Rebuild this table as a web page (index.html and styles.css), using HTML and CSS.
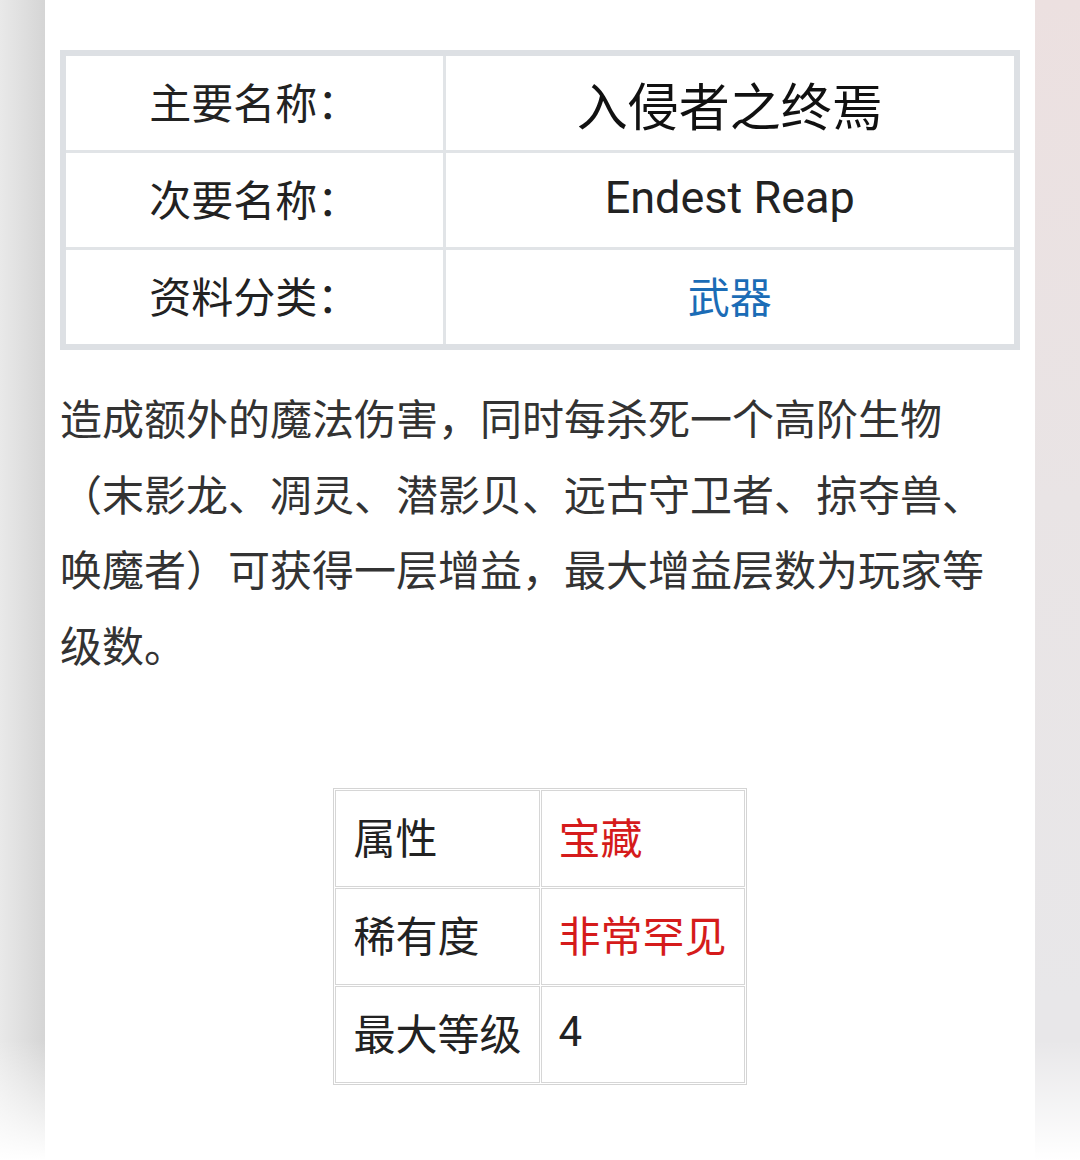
FILE: index.html
```html
<!DOCTYPE html>
<html lang="zh-CN">
<head>
<meta charset="utf-8">
<title>入侵者之终焉</title>
<link rel="stylesheet" href="styles.css">
</head>
<body>
<div class="page">
  <div class="side side-left"></div>
  <main class="panel">
    <table class="infobox">
      <colgroup><col class="col-label"><col></colgroup>
      <tr class="r1">
        <td class="label">主要名称：</td>
        <td class="value title">入侵者之终焉</td>
      </tr>
      <tr class="r2">
        <td class="label">次要名称：</td>
        <td class="value latin">Endest Reap</td>
      </tr>
      <tr class="r3">
        <td class="label">资料分类：</td>
        <td class="value"><a class="link" href="#">武器</a></td>
      </tr>
    </table>
    <p class="desc">造成额外的魔法伤害，同时每杀死一个高阶生物（末影龙、凋灵、潜影贝、远古守卫者、掠夺兽、唤魔者）可获得一层增益，最大增益层数为玩家等级数。</p>
    <table class="stats">
      <tr>
        <td>属性</td>
        <td class="red">宝藏</td>
      </tr>
      <tr>
        <td>稀有度</td>
        <td class="red">非常罕见</td>
      </tr>
      <tr>
        <td>最大等级</td>
        <td class="num">4</td>
      </tr>
    </table>
  </main>
  <div class="side side-right"></div>
</div>
</body>
</html>
```
FILE: styles.css
```css
html, body {
  margin: 0;
  padding: 0;
  background: #ffffff;
}

.page {
  display: grid;
  grid-template-columns: 45px 990px 45px;
  height: 1160px;
  overflow: hidden;
  font-family: "Noto Sans CJK SC", "Noto Sans", sans-serif;
}

.side-left {
  background:
    linear-gradient(to bottom, rgba(255,255,255,0) 0, rgba(255,255,255,0) 1040px, #ffffff 1160px),
    linear-gradient(to right, #e9e9e9 0, #dedede 25px, #d5d5d5 45px);
}

.side-right {
  background:
    linear-gradient(to bottom, rgba(255,255,255,0) 0, rgba(255,255,255,0) 1040px, #ffffff 1160px),
    linear-gradient(to bottom, rgba(236,224,224,1) 0, rgba(233,228,229,1) 500px, rgba(232,231,233,1) 1000px);
}

.panel {
  background: #ffffff;
  padding: 50px 15px 0;
  min-width: 0;
}

.infobox {
  width: 960px;
  border-collapse: collapse;
  border: 6px solid #dde0e4;
  table-layout: fixed;
}

.col-label {
  width: 381px;
}

.infobox td {
  border: 3px solid #e1e4e7;
  padding: 0 0 4px;
  text-align: center;
  vertical-align: middle;
  height: 90px;
}

.infobox .label {
  font-size: 42px;
  color: #222222;
  line-height: 60px;
}

.infobox .title {
  font-size: 51px;
  color: #111111;
  line-height: 60px;
  padding: 2px 0 0;
}

.infobox .latin {
  font-family: Roboto, "Noto Sans CJK SC", sans-serif;
  font-size: 45px;
  color: #222222;
  line-height: 60px;
}

.link {
  font-size: 42px;
  color: #1b6cb6;
  text-decoration: none;
  line-height: 60px;
}

.desc {
  margin: 29px 0 0;
  font-size: 42px;
  line-height: 75.6px;
  color: #333333;
}

.stats {
  margin: 107px auto 0;
  border: 1px solid #d4d4d4;
  border-collapse: separate;
  border-spacing: 1px;
}

.stats td {
  border: 1px solid #d6d6d6;
  padding: 14px 17px 19px;
  font-size: 42px;
  line-height: 62px;
  color: #222222;
  text-align: left;
  vertical-align: middle;
}

.stats .red {
  color: #d51b1b;
}

.stats .num {
  font-family: Roboto, "Noto Sans CJK SC", sans-serif;
}
```
